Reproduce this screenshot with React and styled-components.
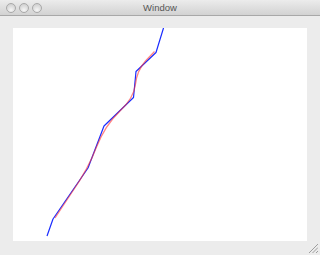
import styled, { createGlobalStyle } from 'styled-components'

const Global = createGlobalStyle`
  html, body { margin: 0; padding: 0; background: #ececec; }
`;

const Frame = styled.div`
  position: relative;
  width: 320px;
  height: 255px;
  background: #ececec;
  display: flex;
  flex-direction: column;
  overflow: hidden;
`;

const TitleBar = styled.div`
  height: 15px;
  flex: none;
  display: flex;
  align-items: center;
  position: relative;
  background: linear-gradient(#ececec, #d2d2d2);
  border-bottom: 1px solid #a8a8a8;
`;

const Lights = styled.div`
  display: flex;
  gap: 3px;
  padding-left: 6px;
`;

const Light = styled.span`
  width: 10px;
  height: 10px;
  box-sizing: border-box;
  border-radius: 50%;
  border: 1px solid #a9a9a9;
  background: radial-gradient(circle at 50% 75%, #f6f6f6 0%, #dcdcdc 55%, #c9c9c9 100%);
`;

const Title = styled.div`
  position: absolute;
  left: 0;
  right: 0;
  text-align: center;
  font-family: "Liberation Sans", Arial, sans-serif;
  font-size: 9.5px;
  color: #555;
  line-height: 15px;
`;

const Body = styled.div`
  flex: 1;
  padding: 12px 0 0 13px;
`;

const Canvas = styled.div`
  width: 294px;
  height: 213px;
  background: #fff;
  svg { display: block; }
`;

const Grip = styled.svg`
  position: absolute;
  right: 2px;
  bottom: 2px;
`;

const blue = [
  [165.3, 22], [163.5, 28], [156, 52.5], [136, 71.5], [133.5, 97.5],
  [104, 126], [88, 168], [53, 219], [47, 236],
];

// smoothed copy of the blue trace
const redPath =
  'M 154.5 51.5 L 145.5 61 Q 137 70.5 135.5 84 Q 134 98 119.5 111.5 ' +
  'Q 105 125.5 96.5 147 Q 88.5 168.5 71.5 193 L 55 218';

export default function App() {
  return (
    <Frame>
      <Global />
      <TitleBar>
        <Lights>
          <Light />
          <Light />
          <Light />
        </Lights>
        <Title>Window</Title>
      </TitleBar>
      <Body>
        <Canvas>
          <svg width="294" height="213" viewBox="13 28 294 213">
            <polyline
              points={blue.map((p) => p.join(',')).join(' ')}
              fill="none"
              stroke="#1a2cff"
              strokeWidth="1.2"
              strokeLinejoin="round"
            />
            <path d={redPath} fill="none" stroke="rgba(255,50,50,0.6)" strokeWidth="1.3" />
          </svg>
        </Canvas>
      </Body>
      <Grip width="10" height="10" viewBox="0 0 10 10">
        <path d="M1 10 L10 1 M4.5 10 L10 4.5 M8 10 L10 8" stroke="#8a8a8a" strokeWidth="0.8" />
      </Grip>
    </Frame>
  )
}
